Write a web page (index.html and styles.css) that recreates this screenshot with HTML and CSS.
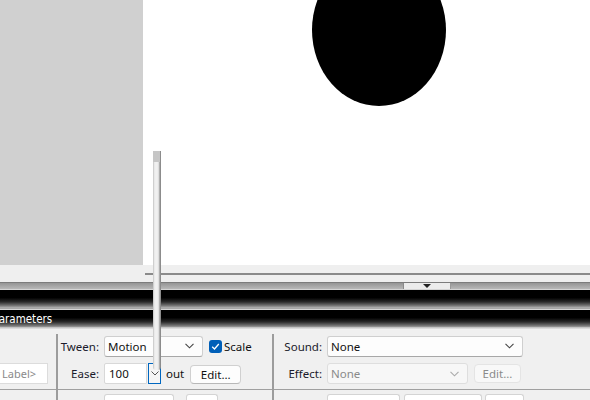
FILE: index.html
```html
<!DOCTYPE html>
<html>
<head>
<meta charset="utf-8">
<link rel="stylesheet" href="styles.css">
</head>
<body>
<div class="app">
  <div class="stage">
    <div class="pasteboard"></div>
    <div class="canvas">
      <div class="ellipse"></div>
    </div>
  </div>
  <div class="hstrip"><div class="hline"></div></div>
  <div class="tlbar"><div class="tab"><span class="tri"></span></div></div>
  <div class="band band1"></div>
  <div class="band-gap"></div>
  <div class="band band2"><span class="band-title">Parameters</span></div>
  <div class="band-fade"></div>
  <div class="panel">
    <div class="col col1">
      <div class="row row1"></div>
      <div class="row row2"><div class="label-input">Label&gt;</div></div>
      <div class="hsep"></div>
      <div class="row row3"></div>
    </div>
    <div class="vsep"></div>
    <div class="col col2">
      <div class="row row1">
        <span class="lbl lbl2">Tween:</span>
        <div class="select sel-tween"><span>Motion</span><svg class="chev" width="9" height="6" viewBox="0 0 9 6"><path d="M0.5 0.8 L4.5 4.8 L8.5 0.8" fill="none" stroke="#444" stroke-width="1.1"/></svg></div>
        <span class="check"><svg width="13" height="13" viewBox="0 0 13 13"><rect x="0" y="0" width="13" height="13" rx="3" fill="#005fb8"/><path d="M3.2 6.8 L5.5 9 L9.8 4" fill="none" stroke="#fff" stroke-width="1.3"/></svg></span>
        <span class="txt">Scale</span>
      </div>
      <div class="row row2">
        <span class="lbl lbl2">Ease:</span>
        <div class="input ease">100</div>
        <div class="spin"><svg width="8" height="5" viewBox="0 0 8 5"><path d="M0.5 0.5 L4 4 L7.5 0.5" fill="none" stroke="#555" stroke-width="1"/></svg></div>
        <span class="txt out">out</span>
        <div class="btn edit1">Edit...</div>
      </div>
      <div class="hsep"></div>
      <div class="row row3">
        <div class="box b1"></div>
        <div class="box b2"></div>
      </div>
    </div>
    <div class="vsep"></div>
    <div class="col col3">
      <div class="row row1">
        <span class="lbl lbl3">Sound:</span>
        <div class="select sel-sound"><span>None</span><svg class="chev" width="9" height="6" viewBox="0 0 9 6"><path d="M0.5 0.8 L4.5 4.8 L8.5 0.8" fill="none" stroke="#444" stroke-width="1.1"/></svg></div>
      </div>
      <div class="row row2">
        <span class="lbl lbl3">Effect:</span>
        <div class="select sel-effect disabled"><span>None</span><svg class="chev" width="9" height="6" viewBox="0 0 9 6"><path d="M0.5 0.8 L4.5 4.8 L8.5 0.8" fill="none" stroke="#aaa" stroke-width="1.1"/></svg></div>
        <div class="btn edit2 disabled">Edit...</div>
      </div>
      <div class="hsep"></div>
      <div class="row row3">
        <div class="box b3"></div>
        <div class="box b4"></div>
        <div class="box b5"></div>
      </div>
    </div>
  </div>
  <div class="slider"><div class="knob"></div><div class="track"></div></div>
</div>
</body>
</html>
```

FILE: styles.css
```css
* { box-sizing: border-box; }
html, body { margin: 0; padding: 0; }
body {
  width: 590px;
  height: 400px;
  overflow: hidden;
  background: #f0f0f0;
  font-family: "Noto Sans", "Open Sans", sans-serif;
  font-size: 11.5px;
  color: #1b1b2b;
}
.app { position: relative; width: 590px; height: 400px; }
.stage { display: flex; height: 265px; }
.pasteboard { width: 143px; background: #d0d0d0; }
.canvas { flex: 1; background: #fff; position: relative; overflow: hidden; }
.ellipse {
  position: absolute;
  left: 169px;
  top: -46px;
  width: 134px;
  height: 152px;
  border-radius: 50%;
  background: #000;
}
.hstrip { height: 17px; background: #efefef; padding-top: 8px; }
.hline { margin-left: 145px; height: 2px; background: #8a8a8a; }
.tlbar {
  height: 7px;
  border-top: 1px solid #7c7c7c;
  background: linear-gradient(#959595, #b8b8b8);
  display: flex;
}
.tab {
  margin-left: 403px;
  width: 48px;
  height: 6px;
  background: #ececec;
  border-left: 1px solid #8a8a8a;
  border-right: 1px solid #9a9a9a;
  display: flex;
  justify-content: center;
  padding-top: 1px;
}
.tri {
  width: 0; height: 0;
  border-left: 4px solid transparent;
  border-right: 4px solid transparent;
  border-top: 4px solid #222;
}
.band {
  height: 18px;
  border-top: 1px solid #d4d4d4;
  background: linear-gradient(#000 0%, #000 45%, #2a2a2a 70%, #6e6e6e 90%, #9a9a9a 100%);
}
.band-gap { height: 2px; background: #a8a8a8; }
.band2 { position: relative; overflow: hidden; }
.band-title {
  display: block;
  margin-left: -7px;
  padding-top: 3px;
  font-family: "DejaVu Sans Condensed", "DejaVu Sans", sans-serif;
  font-size: 11.5px;
  line-height: 13px;
  color: #fff;
}
.band-fade { height: 2px; background: linear-gradient(#b8b8b8, #e6e6e6); }
.panel {
  display: flex;
  height: 71px;
  background: #f0f0f0;
  padding-top: 5px;
}
.col { display: flex; flex-direction: column; }
.col1 { width: 56px; }
.col2 { width: 214px; }
.col3 { flex: 1; }
.vsep { width: 2px; background: #9c9c9c; }
.row { display: flex; align-items: center; }
.row1 { height: 22px; margin-top: 1px; }
.row2 { height: 21px; margin-top: 6px; }
.hsep { height: 1px; background: #a0a0a0; margin-top: 5px; }
.row3 { height: 10px; align-items: flex-start; padding-top: 4px; }
.lbl { text-align: right; flex: none; }
.lbl2 { width: 41px; margin-right: 5px; }
.lbl3 { width: 48px; margin-right: 5px; }
.select {
  height: 21px;
  background: #fdfdfd;
  border: 1px solid #cfcfcf;
  border-bottom-color: #a8a8a8;
  border-radius: 3px;
  display: flex;
  align-items: center;
  justify-content: space-between;
  padding: 0 8px 0 3px;
  color: #111;
}
.sel-tween { width: 99px; }
.sel-sound { width: 196px; }
.sel-effect { width: 141px; }
.select.disabled { background: #f7f7f7; border-color: #dedede; color: #8a8a8a; }
.check { margin-left: 6px; width: 13px; height: 13px; display: flex; }
.txt { margin-left: 2px; color: #111; }
.input {
  height: 21px;
  width: 43px;
  background: #fff;
  border: 1px solid #d8d8d8;
  border-radius: 2px 0 0 2px;
  display: flex;
  align-items: center;
  padding-left: 4px;
  color: #111;
}
.spin {
  width: 13px;
  height: 21px;
  margin-left: 1px;
  border: 1px solid #0067c0;
  background: #f5f5f5;
  display: flex;
  align-items: flex-end;
  justify-content: center;
  padding-bottom: 7px;
}
.out { margin-left: 5px; }
.btn {
  height: 19px;
  background: #fdfdfd;
  border: 1px solid #d0d0d0;
  border-bottom-color: #b8b8b8;
  border-radius: 4px;
  display: flex;
  align-items: center;
  justify-content: center;
  color: #111;
}
.edit1 { width: 51px; margin-left: 6px; margin-top: 2px; }
.edit2 { width: 47px; margin-left: 6px; background: #f8f8f8; border-color: #e4e4e4; color: #8a8a8a; }
.label-input {
  width: 48px;
  height: 21px;
  background: #fff;
  border: 1px solid #dcdcdc;
  border-left: none;
  display: flex;
  align-items: center;
  padding-left: 2px;
  font-size: 11px;
  color: #8a8a8a;
}
.box { height: 10px; background: #fff; border: 1px solid #d4d4d4; border-bottom: none; border-radius: 3px 3px 0 0; }
.b1 { margin-left: 46px; width: 70px; }
.b2 { margin-left: 12px; width: 32px; }
.b3 { margin-left: 53px; width: 73px; }
.b4 { margin-left: 4px; width: 78px; }
.b5 { margin-left: 3px; width: 39px; }
.slider {
  position: absolute;
  left: 153px;
  top: 151px;
  width: 8px;
  height: 219px;
  display: flex;
  flex-direction: column;
}
.knob { height: 11px; background: #c6c6c6; border-right: 1px solid #8c8c8c; }
.track {
  flex: 1;
  background: linear-gradient(90deg, #cfcfcf 0, #cfcfcf 1px, #e6e6e6 1px, #f3f3f3 3px, #ececec 5px, #d2d2d2 6px, #8c8c8c 7px, #8c8c8c 8px);
  border-radius: 0 0 3px 3px;
}
```
